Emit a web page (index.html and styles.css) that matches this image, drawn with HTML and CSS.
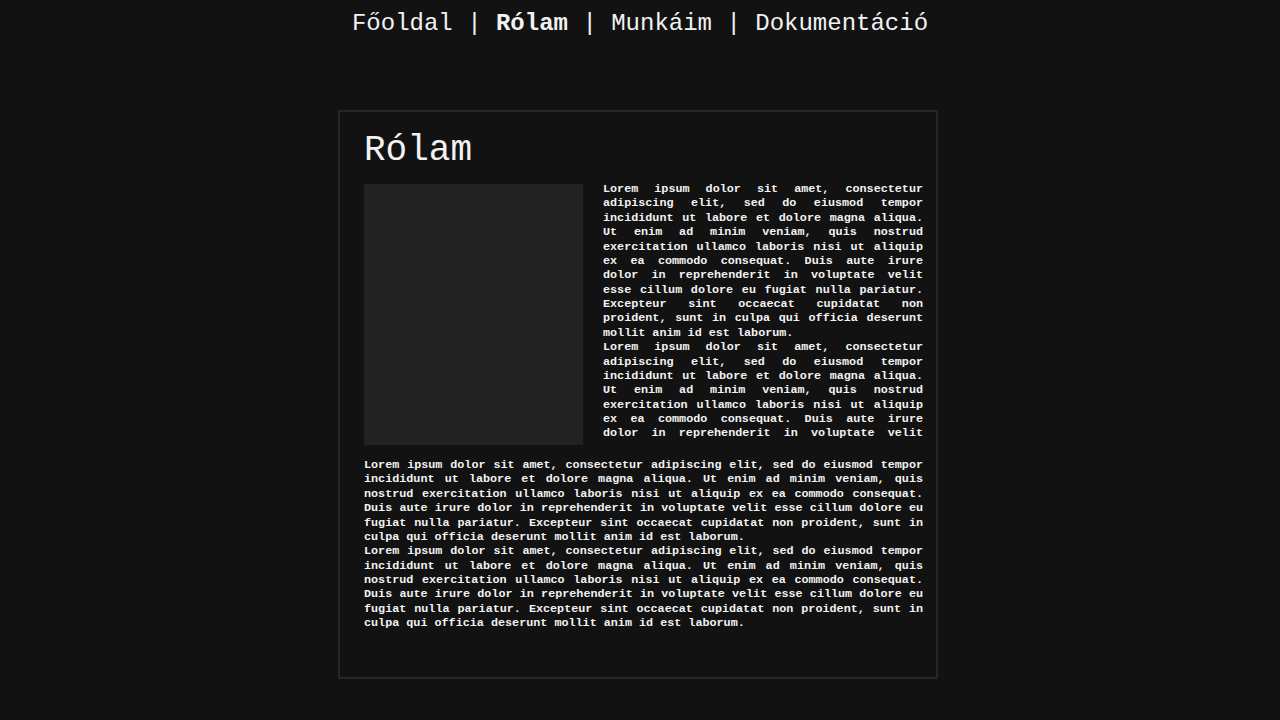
FILE: index.html
```html
<!DOCTYPE html>
<html lang="hu">
<head>
<meta charset="utf-8">
<title>Rólam</title>
<link rel="stylesheet" href="styles.css">
</head>
<body>
<nav class="nav"><a href="#">Főoldal</a> | <a href="#" class="active">Rólam</a> | <a href="#">Munkáim</a> | <a href="#">Dokumentáció</a></nav>
<main class="card">
  <h1 class="title">Rólam</h1>
  <div class="intro">
    <div class="photo"></div>
    <div class="side">
      <p>Lorem ipsum dolor sit amet, consectetur adipiscing elit, sed do eiusmod tempor incididunt ut labore et dolore magna aliqua. Ut enim ad minim veniam, quis nostrud exercitation ullamco laboris nisi ut aliquip ex ea commodo consequat. Duis aute irure dolor in reprehenderit in voluptate velit esse cillum dolore eu fugiat nulla pariatur. Excepteur sint occaecat cupidatat non proident, sunt in culpa qui officia deserunt mollit anim id est laborum.</p>
      <p>Lorem ipsum dolor sit amet, consectetur adipiscing elit, sed do eiusmod tempor incididunt ut labore et dolore magna aliqua. Ut enim ad minim veniam, quis nostrud exercitation ullamco laboris nisi ut aliquip ex ea commodo consequat. Duis aute irure dolor in reprehenderit in voluptate velit esse cillum dolore eu fugiat nulla pariatur. Excepteur sint occaecat cupidatat non proident, sunt in culpa qui officia deserunt mollit anim id est laborum.</p>
    </div>
  </div>
  <div class="body">
    <p>Lorem ipsum dolor sit amet, consectetur adipiscing elit, sed do eiusmod tempor incididunt ut labore et dolore magna aliqua. Ut enim ad minim veniam, quis nostrud exercitation ullamco laboris nisi ut aliquip ex ea commodo consequat. Duis aute irure dolor in reprehenderit in voluptate velit esse cillum dolore eu fugiat nulla pariatur. Excepteur sint occaecat cupidatat non proident, sunt in culpa qui officia deserunt mollit anim id est laborum.</p>
    <p>Lorem ipsum dolor sit amet, consectetur adipiscing elit, sed do eiusmod tempor incididunt ut labore et dolore magna aliqua. Ut enim ad minim veniam, quis nostrud exercitation ullamco laboris nisi ut aliquip ex ea commodo consequat. Duis aute irure dolor in reprehenderit in voluptate velit esse cillum dolore eu fugiat nulla pariatur. Excepteur sint occaecat cupidatat non proident, sunt in culpa qui officia deserunt mollit anim id est laborum.</p>
  </div>
</main>
</body>
</html>
```
FILE: styles.css
```css
html, body {
  margin: 0;
  padding: 0;
  background: #121212;
  color: #f2f2f2;
  font-family: "Liberation Mono", "DejaVu Sans Mono", monospace;
}

.nav {
  padding-top: 10px;
  font-size: 24px;
  line-height: 28px;
  text-align: center;
  white-space: nowrap;
}

.nav a {
  color: #f2f2f2;
  text-decoration: none;
}

.nav a.active {
  font-weight: bold;
}

.card {
  box-sizing: border-box;
  width: 600px;
  height: 569px;
  margin: 72px 0 0 calc(50% - 302px);
  border: 2px solid #262626;
  padding: 17px 13px 0 24px;
}

.title {
  margin: 0 0 12px;
  font-size: 36px;
  line-height: 43px;
  font-weight: normal;
}

.intro {
  display: flex;
  align-items: flex-start;
  gap: 20px;
  margin-bottom: 13px;
}

.photo {
  flex: 0 0 219px;
  height: 261px;
  background: #222222;
}

.side {
  flex: 1;
  height: 260px;
  margin-top: -2px;
  overflow: hidden;
}

.side p,
.body p {
  margin: 0;
  font-size: 11.75px;
  line-height: 14.37px;
  font-weight: bold;
  text-align: justify;
}
```
